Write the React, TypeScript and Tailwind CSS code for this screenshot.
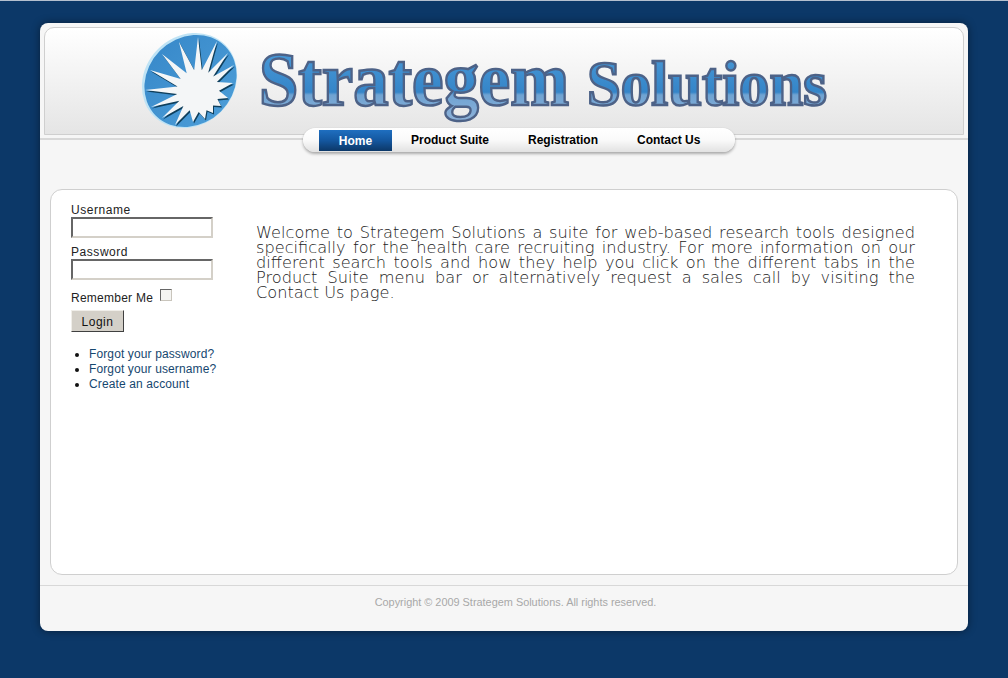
const tips: [number, number][] = [
  [198, 37], [217, 41], [228, 53], [234, 65], [233, 83], [228, 98], [221, 106], [213, 113], [205, 119], [193, 122],
  [175, 125], [162, 118], [151, 107], [145, 90], [150, 70], [162, 54], [179, 42],
];

const starPoints = () => {
  const cx = 198;
  const cy = 91;
  const pts: string[] = [];
  tips.forEach(([x, y], i) => {
    const [nx, ny] = tips[(i + 1) % tips.length];
    pts.push(`${x},${y}`);
    const mx = (x + nx) / 2 - cx;
    const my = (y + ny) / 2 - cy;
    const len = Math.hypot(mx, my);
    pts.push(`${(cx + (mx / len) * 21).toFixed(1)},${(cy + (my / len) * 21).toFixed(1)}`);
  });
  return pts.join(" ");
};

const Logo = () => (
  <svg width="920" height="108" viewBox="44 27 920 108" className="block">
    <defs>
      <linearGradient id="textFill" gradientUnits="userSpaceOnUse" x1="0" y1="50" x2="0" y2="118">
        <stop offset="0" stopColor="#4a9ad8" />
        <stop offset="0.62" stopColor="#3585c8" />
        <stop offset="0.66" stopColor="#6fa3d2" />
        <stop offset="1" stopColor="#8ab0d8" />
      </linearGradient>
      <linearGradient id="discFill" x1="0" y1="0" x2="0" y2="1">
        <stop offset="0" stopColor="#3a8bcb" />
        <stop offset="1" stopColor="#4a9bd6" />
      </linearGradient>
      <clipPath id="discClip">
        <ellipse cx="189.5" cy="80.5" rx="50" ry="44" transform="rotate(-45 189.5 80.5)" />
      </clipPath>
    </defs>
    <ellipse cx="189.5" cy="80.5" rx="50.5" ry="44.5" transform="rotate(-45 189.5 80.5)" fill="#bfe3f5" />
    <ellipse cx="190.5" cy="81" rx="49" ry="43" transform="rotate(-45 190.5 81)" fill="url(#discFill)" />
    <g clipPath="url(#discClip)">
      <polygon points={starPoints()} fill="#0f3f5c" transform="translate(1 1.5)" />
      <polygon points={starPoints()} fill="#f4f6f7" />
    </g>
    <text
      x="259"
      y="105"
      textLength="310"
      lengthAdjust="spacingAndGlyphs"
      fontFamily="'Liberation Serif', serif"
      fontWeight="700"
      fontSize="76"
      fill="url(#textFill)"
      stroke="#4d6287"
      strokeWidth="2.5"
    >
      Strategem
    </text>
    <text
      x="587"
      y="105"
      textLength="240"
      lengthAdjust="spacingAndGlyphs"
      fontFamily="'Liberation Serif', serif"
      fontWeight="700"
      fontSize="64"
      fill="url(#textFill)"
      stroke="#4d6287"
      strokeWidth="2.5"
    >
      Solutions
    </text>
  </svg>
);

const Field = ({ label }: { label: string }) => (
  <div className="h-[42px]">
    <div className="h-[14px] leading-[14px] text-[12px] tracking-[0.55px] text-[#222]">{label}</div>
    <div className="h-[21px] w-[142px] border-2 border-t-[#666] border-l-[#666] border-r-[#d4d0c8] border-b-[#d4d0c8] bg-white" />
  </div>
);

const links = ["Forgot your password?", "Forgot your username?", "Create an account"];

const App = () => (
  <div className="h-[678px] overflow-hidden border-t border-[#b4c0cf] bg-[#0c3868] pt-[22px] pl-[40px] font-['Liberation_Sans',Arial,sans-serif]">
    <div className="h-[608px] w-[928px] rounded-[8px] bg-[#f6f6f6] shadow-[0_0_8px_rgba(0,0,0,0.45)]">
      <div className="px-[4px] pt-[4px]">
        <div className="h-[108px] overflow-hidden rounded-t-[10px] border border-[#cfcfcf] bg-gradient-to-b from-[#ffffff] to-[#e5e5e5]">
          <div className="-mt-px -ml-px">
            <Logo />
          </div>
        </div>
      </div>
      <div className="h-[5px] border-b-2 border-[#d8d8d8]" />

      <div className="relative -mt-[12px] ml-[263px] flex h-[24px] w-[432px] rounded-[12px] bg-gradient-to-b from-[#ffffff] via-[#fafafa] to-[#e2e2e2] pl-[16px] shadow-[0_2px_3px_rgba(0,0,0,0.3),0_0_1px_rgba(0,0,0,0.15)]">
        <a className="mt-[2px] flex h-[21px] w-[73px] items-center justify-center bg-gradient-to-b from-[#1f6fc0] via-[#14579f] to-[#0c3868] text-[12px] font-bold text-white">
          Home
        </a>
        <div className="-ml-[0.5px] flex">
          {["Product Suite", "Registration", "Contact Us"].map((item) => (
            <a key={item} className="flex h-[23px] items-center px-[19.5px] text-[12px] font-bold text-black">
              {item}
            </a>
          ))}
        </div>
      </div>

      <div className="mx-[10px] mt-[37px] flex h-[386px] rounded-[12px] border border-[#cfcfcf] bg-white">
        <div className="w-[205px] shrink-0 pl-[20px] pt-[13px]">
          <Field label="Username" />
          <Field label="Password" />
          <div className="mt-[3px] flex h-[14px] items-start">
            <span className="mt-px text-[12px] leading-[14px] tracking-[0.25px] text-[#222]">Remember Me</span>
            <span className="-mt-[1px] ml-[7px] h-[12px] w-[12px] border border-t-[#666] border-l-[#666] border-r-[#c9c5bc] border-b-[#c9c5bc] bg-[#f4f4f2]" />
          </div>
          <button className="mt-[6px] block h-[22px] w-[53px] border border-t-[#f0eee9] border-l-[#f0eee9] border-r-[#404040] border-b-[#404040] bg-[#d4d0c8] pt-px text-[12px] tracking-[0.5px] text-[#111]">
            Login
          </button>
          <ul className="mt-[15px] list-disc pl-[18px] text-[12px] leading-[15px] tracking-[0.12px] text-[#111]">
            {links.map((link) => (
              <li key={link}>
                <a className="text-[#16476f]">{link}</a>
              </li>
            ))}
          </ul>
        </div>
        <p className="mt-[35px] h-fit w-[659px] text-justify font-['DejaVu_Sans',Verdana,sans-serif] text-[16.2px] leading-[15px] font-extralight text-[#222]">
          Welcome to Strategem Solutions a suite for web-based research tools designed specifically for the health care
          recruiting industry. For more information on our different search tools and how they help you click on the
          different tabs in the Product Suite menu bar or alternatively request a sales call by visiting the Contact Us
          page.
        </p>
      </div>

      <div className="mt-[10px] border-t border-[#d8d8d8] pl-[23px] pt-[10px] text-center text-[10.9px] leading-[13px] text-[#a8a8a8]">
        Copyright © 2009 Strategem Solutions. All rights reserved.
      </div>
    </div>
  </div>
);

export default App;
